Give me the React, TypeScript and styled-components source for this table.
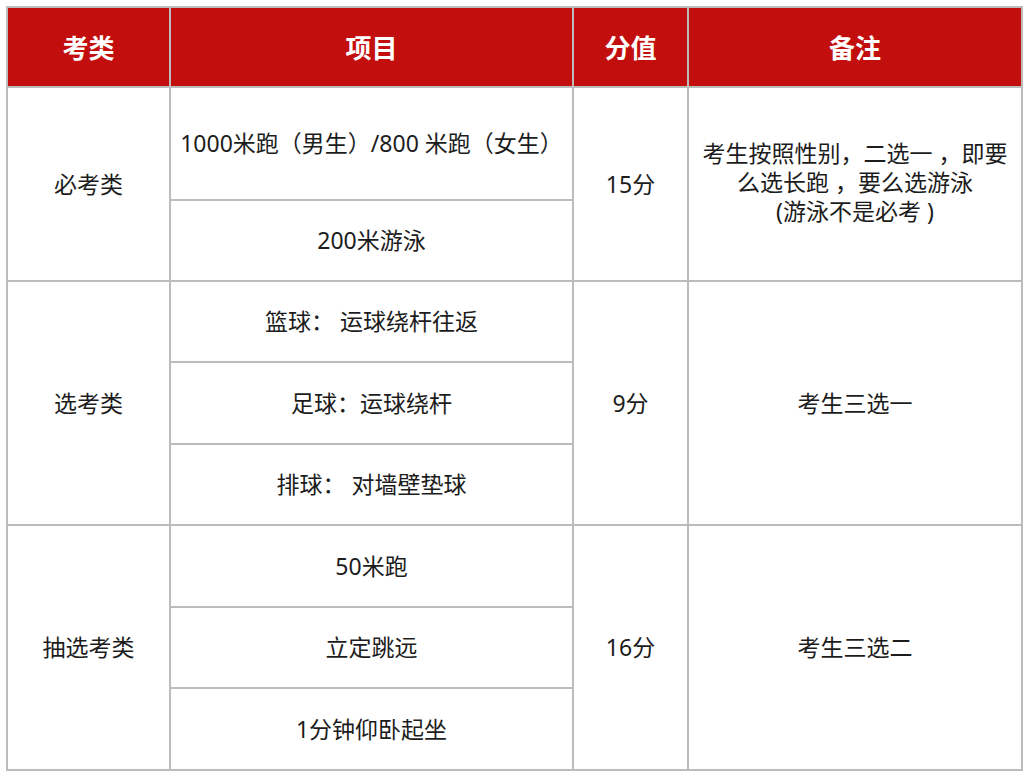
import React from 'react';
import styled, { createGlobalStyle } from 'styled-components';

const GlobalStyle = createGlobalStyle`
  html, body {
    margin: 0;
    padding: 0;
    background: #fff;
  }

  body {
    font-family: 'Noto Sans', 'Noto Sans CJK SC', sans-serif;
  }
`;

const Page = styled.div`
  padding: 6px 0 0 6px;
`;

const Grid = styled.div`
  display: grid;
  width: 1017px;
  box-sizing: border-box;
  grid-template-columns: 161px 401px 113px 332px;
  grid-template-rows: 78px 111px 79px 79px 80px 79px 80px 79px 80px;
  gap: 2px;
  padding: 2px;
  background: #bcbcbc;
`;

const HeadCell = styled.div`
  background: #c30e0e;
  color: #fff;
  font-size: 26px;
  font-weight: 700;
  display: flex;
  align-items: center;
  justify-content: center;
`;

const Cell = styled.div<{ $span?: number }>`
  background: #fff;
  color: #1c1c1c;
  font-size: 23px;
  line-height: 29px;
  display: flex;
  align-items: center;
  justify-content: center;
  text-align: center;
  grid-row: ${(p) => (p.$span ? `span ${p.$span}` : 'auto')};
`;

const Note = styled.div`
  padding: 0 6px;
  margin-top: -4px;
`;

interface Group {
  category: string;
  items: string[];
  score: string;
  note: React.ReactNode;
}

const groups: Group[] = [
  {
    category: '必考类',
    items: ['1000米跑（男生）/800 米跑（女生）', '200米游泳'],
    score: '15分',
    note: (
      <Note>
        考生按照性别，二选一 ，即要
        <br />
        么选长跑 ，要么选游泳
        <br />
        (游泳不是必考 )
      </Note>
    ),
  },
  {
    category: '选考类',
    items: ['篮球： 运球绕杆往返', '足球：运球绕杆', '排球： 对墙壁垫球'],
    score: '9分',
    note: '考生三选一',
  },
  {
    category: '抽选考类',
    items: ['50米跑', '立定跳远', '1分钟仰卧起坐'],
    score: '16分',
    note: '考生三选二',
  },
];

const App = () => {
  return (
    <Page>
      <GlobalStyle />
      <Grid>
        <HeadCell>考类</HeadCell>
        <HeadCell>项目</HeadCell>
        <HeadCell>分值</HeadCell>
        <HeadCell>备注</HeadCell>

        {groups.map((g) => (
          <React.Fragment key={g.category}>
            <Cell $span={g.items.length}>{g.category}</Cell>
            <Cell>{g.items[0]}</Cell>
            <Cell $span={g.items.length}>{g.score}</Cell>
            <Cell $span={g.items.length}>{g.note}</Cell>
            {g.items.slice(1).map((item) => (
              <Cell key={item} style={{ gridColumn: 2 }}>
                {item}
              </Cell>
            ))}
          </React.Fragment>
        ))}
      </Grid>
    </Page>
  );
};

export default App;
